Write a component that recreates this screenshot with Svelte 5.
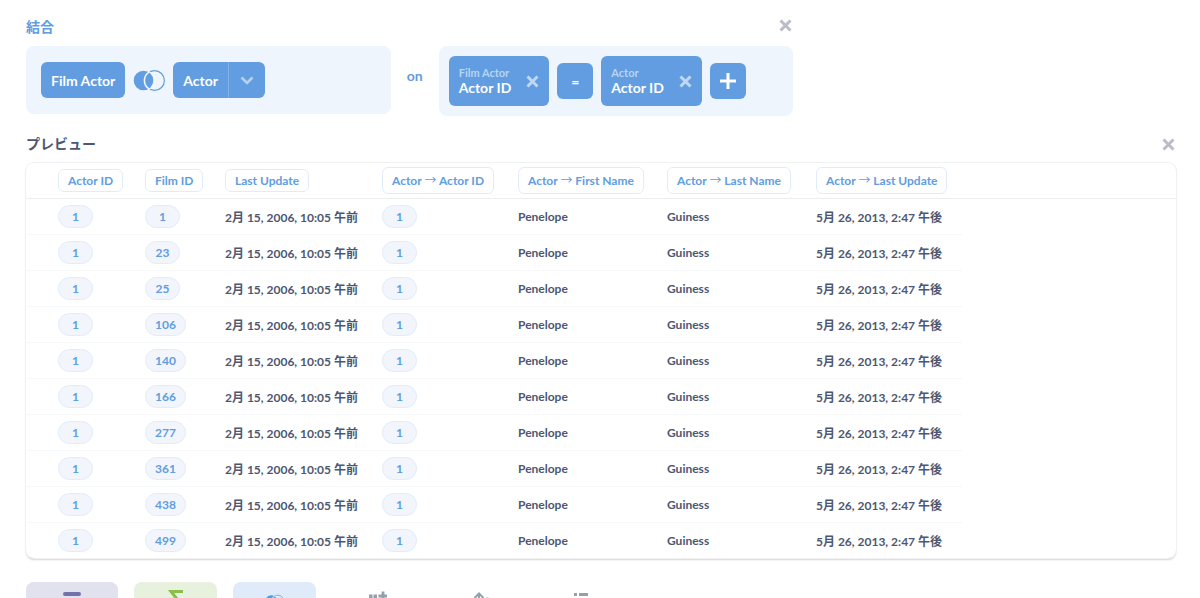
<script lang="ts">
	interface Row {
		filmId: number;
	}

	let showJoin = $state(true);
	let showPreview = $state(true);

	const joinedColumns = ['Actor ID', 'First Name', 'Last Name', 'Last Update'];
	const rows: Row[] = [1, 23, 25, 106, 140, 166, 277, 361, 438, 499].map((filmId) => ({ filmId }));
</script>

{#snippet cross(size: number)}
	<svg width={size} height={size} viewBox="0 0 12 12" aria-hidden="true">
		<path d="M1.4 1.4 10.6 10.6M10.6 1.4 1.4 10.6" stroke="currentColor" stroke-width="2.8" />
	</svg>
{/snippet}

{#snippet leftJoin(width: number, height: number)}
	<svg class="venn" {width} {height} viewBox="0 0 32 21" aria-hidden="true">
		<circle cx="21.5" cy="10.5" r="9.9" fill="none" stroke="currentColor" stroke-width="1.2" />
		<circle class="gap" cx="10.5" cy="10.5" r="10.4" fill="currentColor" stroke-width="1.2" />
		<path class="gap" d="M16 2.1A10 10 0 0 0 16 18.9" fill="none" stroke-width="1.6" />
	</svg>
{/snippet}

<main class="notebook">
	{#if showJoin}
		<section class="join">
			<header class="step-header">
				<h2 class="brand">結合</h2>
				<button class="close" aria-label="Remove join" onclick={() => (showJoin = false)}>
					{@render cross(13)}
				</button>
			</header>
			<div class="join-body">
				<div class="cell tables">
					<button class="chip">Film Actor</button>
					<button class="join-type" aria-label="Left outer join">{@render leftJoin(32, 21)}</button>
					<div class="split">
						<button class="chip">Actor</button>
						<button class="chip more" aria-label="Pick columns">
							<svg width="14" height="9" viewBox="0 0 14 9" aria-hidden="true">
								<path d="M1.5 1.5 7 7l5.5-5.5" fill="none" stroke="currentColor" stroke-width="2.6" />
							</svg>
						</button>
					</div>
				</div>
				<span class="on">on</span>
				<div class="cell condition">
					{#each ['Film Actor', 'Actor'] as table, i}
						{#if i > 0}
							<button class="chip square">=</button>
						{/if}
						<div class="chip column">
							<button class="column-name"><small>{table}</small>Actor ID</button>
							<button class="remove" aria-label="Remove column">{@render cross(13)}</button>
						</div>
					{/each}
					<button class="chip square" aria-label="Add condition">
						<svg width="16" height="16" viewBox="0 0 16 16" aria-hidden="true">
							<path d="M8 0v16M0 8h16" stroke="currentColor" stroke-width="3" />
						</svg>
					</button>
				</div>
			</div>
		</section>
	{/if}

	{#if showPreview}
		<section class="preview">
			<header class="step-header centered">
				<h2>プレビュー</h2>
				<button class="close" aria-label="Close preview" onclick={() => (showPreview = false)}>
					{@render cross(13)}
				</button>
			</header>
			<div class="card">
				<table>
					<colgroup>
						<col class="w-actor" />
						<col class="w-film" />
						<col class="w-date" />
						<col class="w-id" />
						<col class="w-name" />
						<col class="w-name" />
						<col class="w-date" />
						<col />
					</colgroup>
					<thead>
						<tr>
							<th><span class="head">Actor ID</span></th>
							<th><span class="head">Film ID</span></th>
							<th><span class="head">Last Update</span></th>
							{#each joinedColumns as name}
								<th><span class="head joined">Actor <span class="arrow">→</span> {name}</span></th>
							{/each}
							<td></td>
						</tr>
					</thead>
					<tbody>
						{#each rows as row}
							<tr>
								<td><a class="pill" href="#actor">1</a></td>
								<td><a class="pill" href="#film">{row.filmId}</a></td>
								<td>2月 15, 2006, 10:05 午前</td>
								<td><a class="pill" href="#actor">1</a></td>
								<td>Penelope</td>
								<td>Guiness</td>
								<td>5月 26, 2013, 2:47 午後</td>
							</tr>
						{/each}
					</tbody>
				</table>
			</div>
		</section>
	{/if}

	<nav class="actions">
		<button class="action filter" aria-label="Filter">
			<svg width="18" height="20" viewBox="0 0 18 20" aria-hidden="true">
				<path d="M2 4h14M4 12h10M6 19h6" stroke="currentColor" stroke-width="4" stroke-linecap="round" />
			</svg>
		</button>
		<button class="action summarize" aria-label="Summarize">
			<svg width="18" height="20" viewBox="0 0 18 20" aria-hidden="true">
				<path d="M16 1.5H4L10 9l-6 7.5h12" fill="none" stroke="currentColor" stroke-width="3" />
			</svg>
		</button>
		<button class="action join-data" aria-label="Join data">{@render leftJoin(19, 22)}</button>
		<button class="action" aria-label="Custom column">
			<svg width="18" height="20" viewBox="0 0 18 20" aria-hidden="true">
				<path d="M0 4.5h3.5v15H0zM4.5 4.5H8v15H4.500z" fill="currentColor" />
				<path d="M14 1.5v9M9.5 6h9" stroke="currentColor" stroke-width="2.800" />
			</svg>
		</button>
		<button class="action narrow" aria-label="Sort">
			<svg width="18" height="20" viewBox="0 0 18 20" aria-hidden="true">
				<path
					d="M6 18V3.500M1.500 8 6 3.500l4.500 4.500M14.500 7.500V18M11 14l3.500 4 3.500-4"
					fill="none"
					stroke="currentColor"
					stroke-width="2"
				/>
			</svg>
		</button>
		<button class="action narrow" aria-label="Row limit">
			<svg width="14" height="20" viewBox="0 0 14 20" aria-hidden="true">
				<path d="M0 4.500h3M5 4.500h9M0 10.500h3M5 10.500h9M0 16.500h3M5 16.500h9" stroke="currentColor" stroke-width="2.800" />
			</svg>
		</button>
	</nav>
</main>

<style>
	:global(body) {
		background: #fff;
	}

	.notebook {
		padding: 16px 24px 0 26px;
		font-family: Lato, 'Noto Sans CJK JP', sans-serif;
		font-size: 14px;
		font-weight: 700;
		color: #4c5773;
	}

	button {
		font: inherit;
		color: inherit;
		border: 0;
		padding: 0;
		background: none;
		cursor: pointer;
	}

	svg {
		display: block;
	}

	h2 {
		margin: 0;
		font-size: 14px;
		line-height: 22px;
	}

	.brand,
	.on {
		color: #619de0;
	}

	.step-header {
		display: flex;
		align-items: flex-start;
		justify-content: space-between;
	}

	.step-header.centered {
		align-items: center;
	}

	.close {
		display: flex;
		padding: 3px 1px;
		color: #b9bdc7;
	}

	.join {
		width: calc(200% / 3);
	}

	.join-body {
		display: grid;
		grid-template-columns: 34fr 48px 33fr;
		align-items: start;
		margin-top: 8px;
	}

	.cell {
		display: flex;
		align-items: center;
		gap: 8px;
		border-radius: 8px;
		background: #eef5fd;
	}

	.tables {
		padding: 16px 15px;
	}

	.condition {
		padding: 10px;
	}

	.on {
		padding-top: 21px;
		line-height: 18px;
		text-align: center;
	}

	.chip {
		height: 36px;
		padding: 0 10px;
		border-radius: 6px;
		background: #619de0;
		color: #fff;
		white-space: nowrap;
	}

	.join-type {
		color: #619de0;
	}

	.venn .gap {
		stroke: #eef5fd;
	}

	.split {
		display: flex;
	}

	.split .chip:first-child {
		border-radius: 6px 0 0 6px;
	}

	.chip.more {
		padding: 0 11px;
		border-left: 1px solid #81b1e6;
		border-radius: 0 6px 6px 0;
		color: #b4d1f2;
	}

	.chip.square {
		display: flex;
		align-items: center;
		justify-content: center;
		width: 36px;
		padding: 0;
	}

	.chip.column {
		display: flex;
		align-items: center;
		gap: 15px;
		height: 50px;
	}

	.column-name {
		text-align: left;
		line-height: 16px;
	}

	.column-name small {
		display: block;
		font-size: 11px;
		line-height: 14px;
		color: #b8d4f3;
	}

	.remove {
		color: #c0d8f4;
	}

	.preview {
		margin-top: 17px;
	}

	.card {
		margin-top: 8px;
		border-radius: 8px;
		box-shadow:
			0 0 0 1px #f1f1f1,
			0 2px 2px #d4d4d4;
		overflow: hidden;
	}

	table {
		width: 100%;
		border-collapse: separate;
		border-spacing: 0;
		table-layout: fixed;
		font-size: 12px;
		white-space: nowrap;
	}

	.w-actor {
		width: 108px;
	}

	.w-film {
		width: 80px;
	}

	.w-date {
		width: 157px;
	}

	.w-id {
		width: 136px;
	}

	.w-name {
		width: 149px;
	}

	th,
	td {
		height: 35px;
		padding: 0 11px;
		border-bottom: 1px solid #f6f7f8;
		text-align: left;
	}

	th:first-child,
	td:first-child {
		padding-left: 32px;
	}

	thead th,
	thead td {
		border-bottom-color: #eceded;
	}

	tbody tr:last-child td {
		border-bottom: 0;
	}

	.head,
	.pill {
		display: inline-block;
		box-sizing: border-box;
		border: 1px solid #e0ecfa;
		line-height: 21px;
		vertical-align: middle;
		color: #619de0;
	}

	.head {
		padding: 0 9px;
		border-radius: 6px;
	}

	.head.joined {
		line-height: 25px;
	}

	.arrow {
		font-family: 'Noto Sans CJK JP', sans-serif;
		font-weight: 400;
		line-height: 1;
	}

	.pill {
		min-width: 35px;
		padding: 0 9px;
		border-radius: 12px;
		background: #f2f6fc;
		text-align: center;
		text-decoration: none;
	}

	.actions {
		display: flex;
		gap: 16px;
		margin-top: 24px;
	}

	.action {
		display: flex;
		align-items: flex-start;
		justify-content: center;
		width: 92px;
		height: 60px;
		padding-top: 8px;
		border-radius: 8px;
		color: #93a1ab;
	}

	.filter {
		background: #e2e1ee;
		color: #7172ad;
	}

	.summarize,
	.join-data,
	.narrow {
		width: 83px;
	}

	.summarize {
		background: #e8f1de;
		color: #88bf4d;
	}

	.join-data {
		background: #dfebf8;
		color: #509ee3;
	}
</style>
